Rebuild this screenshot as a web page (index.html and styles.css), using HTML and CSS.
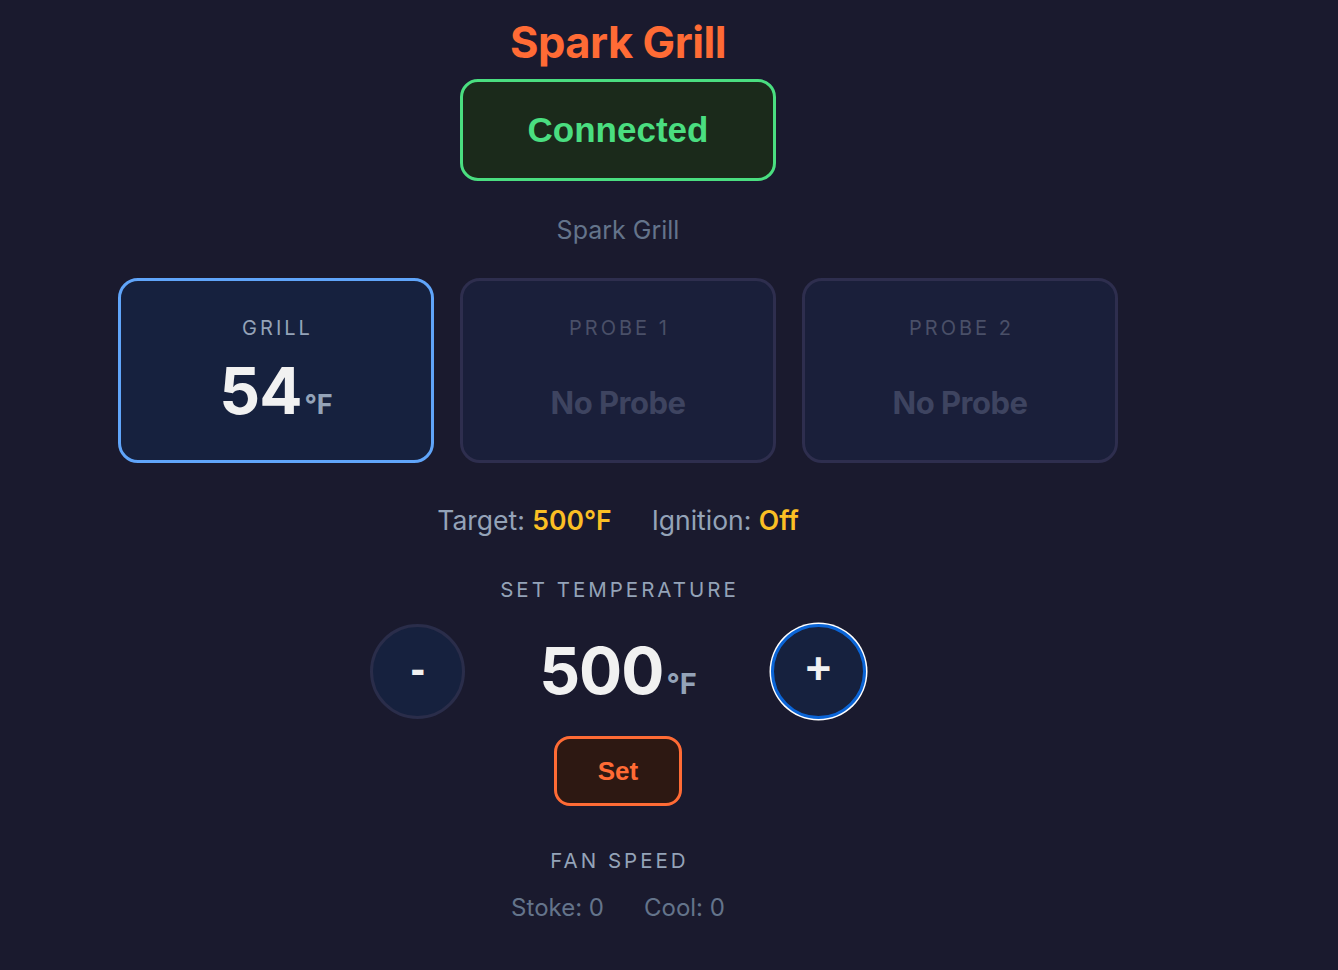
FILE: index.html
```html
<!DOCTYPE html>
<html lang="en">
<head>
<meta charset="utf-8">
<title>Spark Grill</title>
<link rel="stylesheet" href="styles.css">
</head>
<body>
<main class="app">
  <h1 class="title">Spark Grill</h1>
  <div class="status">Connected</div>
  <div class="device">Spark Grill</div>

  <section class="cards">
    <div class="card card-active">
      <div class="card-label">GRILL</div>
      <div class="card-value">54<span class="unit">°F</span></div>
    </div>
    <div class="card card-off">
      <div class="card-label">PROBE 1</div>
      <div class="card-value"><span class="no-probe">No Probe</span></div>
    </div>
    <div class="card card-off">
      <div class="card-label">PROBE 2</div>
      <div class="card-value"><span class="no-probe">No Probe</span></div>
    </div>
  </section>

  <div class="info">
    <span class="info-item">Target: <b class="hl">500°F</b></span>
    <span class="info-item">Ignition: <b class="hl">Off</b></span>
  </div>

  <div class="section-label set-label">SET TEMPERATURE</div>
  <div class="controls">
    <button class="round-btn">-</button>
    <div class="set-temp">500<span class="unit big-unit">°F</span></div>
    <button class="round-btn focused">+</button>
  </div>
  <button class="set-btn">Set</button>

  <div class="section-label fan-label">FAN SPEED</div>
  <div class="fan">
    <span>Stoke: 0</span>
    <span>Cool: 0</span>
  </div>
</main>
</body>
</html>
```

FILE: styles.css
```css
html, body {
  margin: 0;
  padding: 0;
  background: #1a1a2e;
}
body {
  font-family: Inter, "Noto Sans", sans-serif;
  color: #e5e7eb;
}
.app {
  width: 1236px;
  padding-top: 17px;
  display: flex;
  flex-direction: column;
  align-items: center;
  text-align: center;
}
.title {
  margin: 0;
  font-size: 43.5px;
  line-height: 50px;
  font-weight: 700;
  color: #ff6b35;
  letter-spacing: -0.5px;
}
.status {
  margin-top: 12px;
  box-sizing: border-box;
  width: 316px;
  height: 102px;
  border: 3px solid #4ade80;
  border-radius: 18px;
  background: #1b2a1b;
  color: #4ade80;
  font-family: "Liberation Sans", Arial, sans-serif;
  font-weight: 700;
  font-size: 35px;
  line-height: 96px;
}
.device {
  margin-top: 34px;
  font-size: 25px;
  line-height: 30px;
  color: #64748b;
}
.cards {
  margin-top: 33px;
  display: flex;
  gap: 26px;
}
.card {
  box-sizing: border-box;
  width: 316px;
  height: 185px;
  border: 3px solid #2e2e4e;
  border-radius: 20px;
  background: #1a1f3a;
  padding-top: 35px;
}
.card-active {
  border-color: #60a5fa;
  background: #16213e;
}
.card-label {
  font-size: 20px;
  line-height: 24px;
  letter-spacing: 3px;
  color: #94a3b8;
  padding-left: 3px;
}
.card-off .card-label {
  color: #4a5068;
}
.card-value {
  margin-top: 13px;
  font-size: 64px;
  line-height: 76px;
  font-weight: 700;
  color: #f1f1f1;
  letter-spacing: -1px;
}
.unit {
  font-size: 27px;
  color: #94a3b8;
  letter-spacing: 0;
  margin-left: 3px;
}
.no-probe {
  font-size: 31px;
  color: #3e4460;
  letter-spacing: -0.5px;
}
.info {
  margin-top: 41px;
  display: flex;
  gap: 40px;
  font-size: 26.5px;
  line-height: 32px;
  color: #94a3b8;
}
.hl {
  color: #fbbf24;
  font-weight: 600;
}
.section-label {
  font-size: 20.5px;
  line-height: 26px;
  letter-spacing: 3px;
  color: #94a3b8;
  padding-left: 3px;
}
.set-label {
  margin-top: 41px;
}
.controls {
  margin-top: 20px;
  height: 96px;
  display: flex;
  align-items: center;
  gap: 74px;
}
.round-btn {
  box-sizing: border-box;
  width: 95px;
  height: 95px;
  border-radius: 50%;
  border: 3px solid #2a2d4a;
  background: #16213e;
  color: #f1f1f1;
  font-family: "Liberation Sans", Arial, sans-serif;
  font-size: 44px;
  font-weight: 700;
  padding: 0 0 4px;
  line-height: 1;
}
.round-btn.focused {
  border-color: #0a64d6;
  box-shadow: 0 0 0 1.5px #ffffff;
}
.set-temp {
  font-size: 64px;
  line-height: 76px;
  font-weight: 700;
  color: #f1f1f1;
  letter-spacing: -1px;
  padding-top: 12px;
}
.big-unit {
  font-size: 29px;
}
.set-btn {
  margin-top: 17px;
  box-sizing: border-box;
  width: 128px;
  height: 70px;
  border: 3px solid #ff6b35;
  border-radius: 16px;
  background: #2d1812;
  color: #ff6b35;
  font-family: "Liberation Sans", Arial, sans-serif;
  font-weight: 700;
  font-size: 26px;
  padding: 0;
}
.fan-label {
  margin-top: 42px;
}
.fan {
  margin-top: 20px;
  display: flex;
  gap: 40px;
  font-size: 24px;
  line-height: 28px;
  color: #64748b;
}
```
